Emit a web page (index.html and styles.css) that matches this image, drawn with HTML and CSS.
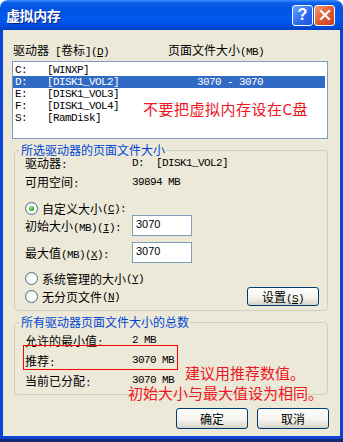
FILE: index.html
```html
<!DOCTYPE html>
<html lang="zh-CN">

<head>
    <meta charset="UTF-8">
    <meta name="viewport" content="width=device-width, initial-scale=1.0">
    <title>虚拟内存</title>
    <link rel="stylesheet" href="styles.css">
</head>

<body>
    <div class="window">
        <!-- Title bar -->
        <div class="titlebar">
            <span class="title">虚拟内存</span>
            <span class="tb-btn help">?</span>
            <span class="tb-btn close">
                <svg width="12" height="12" viewBox="0 0 12 12">
                    <path d="M2 2L10 10M10 2L2 10" stroke="#fff" stroke-width="2.2" stroke-linecap="square" />
                </svg>
            </span>
        </div>

        <div class="client">
            <!-- Drive list -->
            <div class="list-head">
                <span class="col-drive">驱动器<span class="m"> [</span>卷标<span class="m">](<u>D</u>)</span></span>
                <span>页面文件大小<span class="m">(MB)</span></span>
            </div>
            <div class="listbox">
                <div class="row"><span class="c1 m">C:</span><span class="c2 m">[WINXP]</span></div>
                <div class="row sel"><span class="c1 m">D:</span><span class="c2 m">[DISK1_VOL2]</span><span class="m pre">3070 - 3070</span></div>
                <div class="row"><span class="c1 m">E:</span><span class="c2 m">[DISK1_VOL3]</span></div>
                <div class="row"><span class="c1 m">F:</span><span class="c2 m">[DISK1_VOL4]</span></div>
                <div class="row"><span class="c1 m">S:</span><span class="c2 m">[RamDisk]</span></div>
                <div class="note note-c">不要把虚拟内存设在C盘</div>
            </div>

            <!-- Selected drive -->
            <div class="group g1">
                <div class="group-title">所选驱动器的页面文件大小</div>
                <div class="info"><span class="lbl">驱动器<span class="m">:</span></span><span class="m pre">D:  [DISK1_VOL2]</span></div>
                <div class="info gap6"><span class="lbl">可用空间<span class="m">:</span></span><span class="m">39894 MB</span></div>
                <div class="opt opt-custom"><span class="radio on"></span>自定义大小<span class="m">(<u>C</u>):</span></div>
                <div class="field-row">
                    <label class="lbl" for="initial">初始大小<span class="m">(MB)(<u>I</u>):</span></label>
                    <input class="field" id="initial" type="text" value="3070">
                </div>
                <div class="field-row gap6">
                    <label class="lbl" for="maximum">最大值<span class="m">(MB)(<u>X</u>):</span></label>
                    <input class="field" id="maximum" type="text" value="3070">
                </div>
                <div class="opt opt-system"><span class="radio"></span>系统管理的大小<span class="m">(<u>Y</u>)</span></div>
                <div class="opt-line">
                    <div class="opt"><span class="radio"></span>无分页文件<span class="m">(<u>N</u>)</span></div>
                    <button class="btn">设置<span class="m">(<u>S</u>)</span></button>
                </div>
            </div>

            <!-- Totals -->
            <div class="group g2">
                <div class="group-title">所有驱动器页面文件大小的总数</div>
                <div class="sum first"><span class="lbl">允许的最小值<span class="m">:</span></span><span class="m">2 MB</span></div>
                <div class="sum"><span class="lbl">推荐<span class="m">:</span></span><span class="m">3070 MB</span></div>
                <div class="sum"><span class="lbl">当前已分配<span class="m">:</span></span><span class="m">3070 MB</span></div>
            </div>

            <div class="actions">
                <button class="btn big">确定</button>
                <button class="btn big">取消</button>
            </div>

            <!-- Annotations drawn over the dialog -->
            <div class="mark"></div>
            <div class="note note-tip1">建议用推荐数值。</div>
            <div class="note note-tip2">初始大小与最大值设为相同。</div>
        </div>
        <div class="bottom-strip"></div>
    </div>
</body>

</html>
```

FILE: styles.css
```css
* {
    box-sizing: border-box;
}

body {
    margin: 0;
    background: #fff;
    font-family: "Noto Sans CJK SC", sans-serif;
    font-size: 12px;
    color: #000;
}

/* Latin text in the old bitmap font is half-width: 6px a char */
.m {
    font-family: "Liberation Mono", "DejaVu Sans Mono", monospace;
    font-size: 11px;
    letter-spacing: -0.6px;
}

.pre {
    white-space: pre;
}

u {
    text-underline-offset: 1px;
}

.window {
    width: 343px;
    height: 442px;
    display: flex;
    flex-direction: column;
    border-radius: 8px 8px 0 0;
    overflow: hidden;
}

.titlebar {
    height: 30px;
    flex: none;
    display: flex;
    align-items: center;
    padding: 0 8px 0 6px;
    background: linear-gradient(#3a8cff 0, #0a5ee8 3px, #0054e3 8px, #0058ee 20px, #004bd8 27px, #003fc4 30px);
}

.title {
    flex: 1;
    color: #fff;
    font-weight: bold;
    font-size: 14px;
    letter-spacing: -0.4px;
    text-shadow: 1px 1px #0d1f8c;
}

.tb-btn {
    width: 21px;
    height: 21px;
    margin-left: 1px;
    border: 1px solid #fff;
    border-radius: 3px;
    display: flex;
    align-items: center;
    justify-content: center;
}

.help {
    background: linear-gradient(135deg, #6aa6ff, #2b66ec 60%, #1f55d8);
    color: #fff;
    font: bold 16px "Liberation Sans", sans-serif;
}

.close {
    background: linear-gradient(135deg, #f29a74, #e0582c 55%, #c8401a);
}

.client {
    flex: 1;
    position: relative;
    background: #ece9d8;
    border: 3px solid #0b45d8;
    border-top: 0;
    padding: 13px 12px 0 9px;
}

.bottom-strip {
    height: 3px;
    flex: none;
    background: #14286e;
}

/* Drive list */
.list-head {
    display: flex;
    line-height: 14px;
    padding-left: 1px;
}

.col-drive {
    width: 155px;
}

.listbox {
    position: relative;
    height: 78px;
    margin-top: 2px;
    padding: 2px 2px 0 0;
    border: 1px solid #7f9db9;
    background: #fff;
}

.row {
    display: flex;
    height: 12px;
    line-height: 12px;
    padding-left: 2px;
}

.row .c1 {
    width: 32px;
}

.row .c2 {
    width: 150px;
}

.row.sel {
    background: #316ac5;
    color: #fff;
}

.note {
    position: absolute;
    color: #ee1620;
    font-size: 15px;
    line-height: 16px;
    white-space: nowrap;
}

.note-c {
    left: 130px;
    top: 39px;
    letter-spacing: 0.5px;
}

/* Group boxes */
.group {
    margin-left: 2px;
    padding: 0 8px 0 10px;
    border: 1px solid #d0d0bf;
    border-radius: 4px;
}

.group-title {
    width: fit-content;
    margin: -7px 0 0 -5px;
    padding: 0 1px;
    line-height: 12px;
    background: #ece9d8;
    color: #0046d5;
}

.g1 {
    height: 161px;
    margin-top: 11px;
}

.g2 {
    height: 73px;
    margin-top: 11px;
}

.info {
    display: flex;
    line-height: 12px;
    margin-top: 1px;
}

.info.gap6 {
    margin-top: 5px;
}

.field-row.gap6 {
    margin-top: 6px;
}

.lbl {
    width: 107px;
    flex: none;
}

.opt {
    display: flex;
    align-items: center;
    height: 13px;
}

.opt-custom {
    margin-top: 12px;
}

.opt-system {
    margin-top: 9px;
}

.radio {
    width: 13px;
    height: 13px;
    margin-right: 4px;
    border: 1px solid #4a6f92;
    border-radius: 50%;
    background: radial-gradient(circle at 60% 60%, #fff 30%, #e4e2d6 100%);
    display: flex;
    align-items: center;
    justify-content: center;
}

.radio.on::after {
    content: "";
    width: 5px;
    height: 5px;
    border-radius: 50%;
    background: radial-gradient(circle at 35% 35%, #8fe28f, #21a121 70%);
}

.field-row {
    display: flex;
    align-items: center;
    height: 21px;
}

.field {
    width: 60px;
    height: 21px;
    margin: 0;
    padding: 0 3px 4px;
    border: 1px solid #7f9db9;
    background: #fff;
    font: 11px "Liberation Sans", sans-serif;
    color: #000;
    outline: none;
}

.opt-line {
    display: flex;
    align-items: center;
    justify-content: space-between;
    height: 19px;
    margin-top: 2px;
}

.btn {
    width: 72px;
    height: 19px;
    padding: 0;
    border: 1px solid #003c74;
    border-radius: 3px;
    background: linear-gradient(#fff, #f4f3ee 55%, #e3e0d5 85%, #d6d0c5);
    font-family: "Noto Sans CJK SC", sans-serif;
    font-size: 12px;
    color: #000;
}

.btn.big {
    height: 21px;
}

.sum {
    display: flex;
    line-height: 17px;
}

.sum.first {
    margin-top: 4px;
}

.actions {
    display: flex;
    justify-content: flex-end;
    gap: 9px;
    margin: 13px -1px 0 0;
}

.mark {
    position: absolute;
    left: 20px;
    top: 315px;
    width: 155px;
    height: 25px;
    border: 1px solid #ff0000;
}

.note-tip1 {
    left: 182px;
    top: 335px;
}

.note-tip2 {
    left: 125px;
    top: 355px;
}
```
